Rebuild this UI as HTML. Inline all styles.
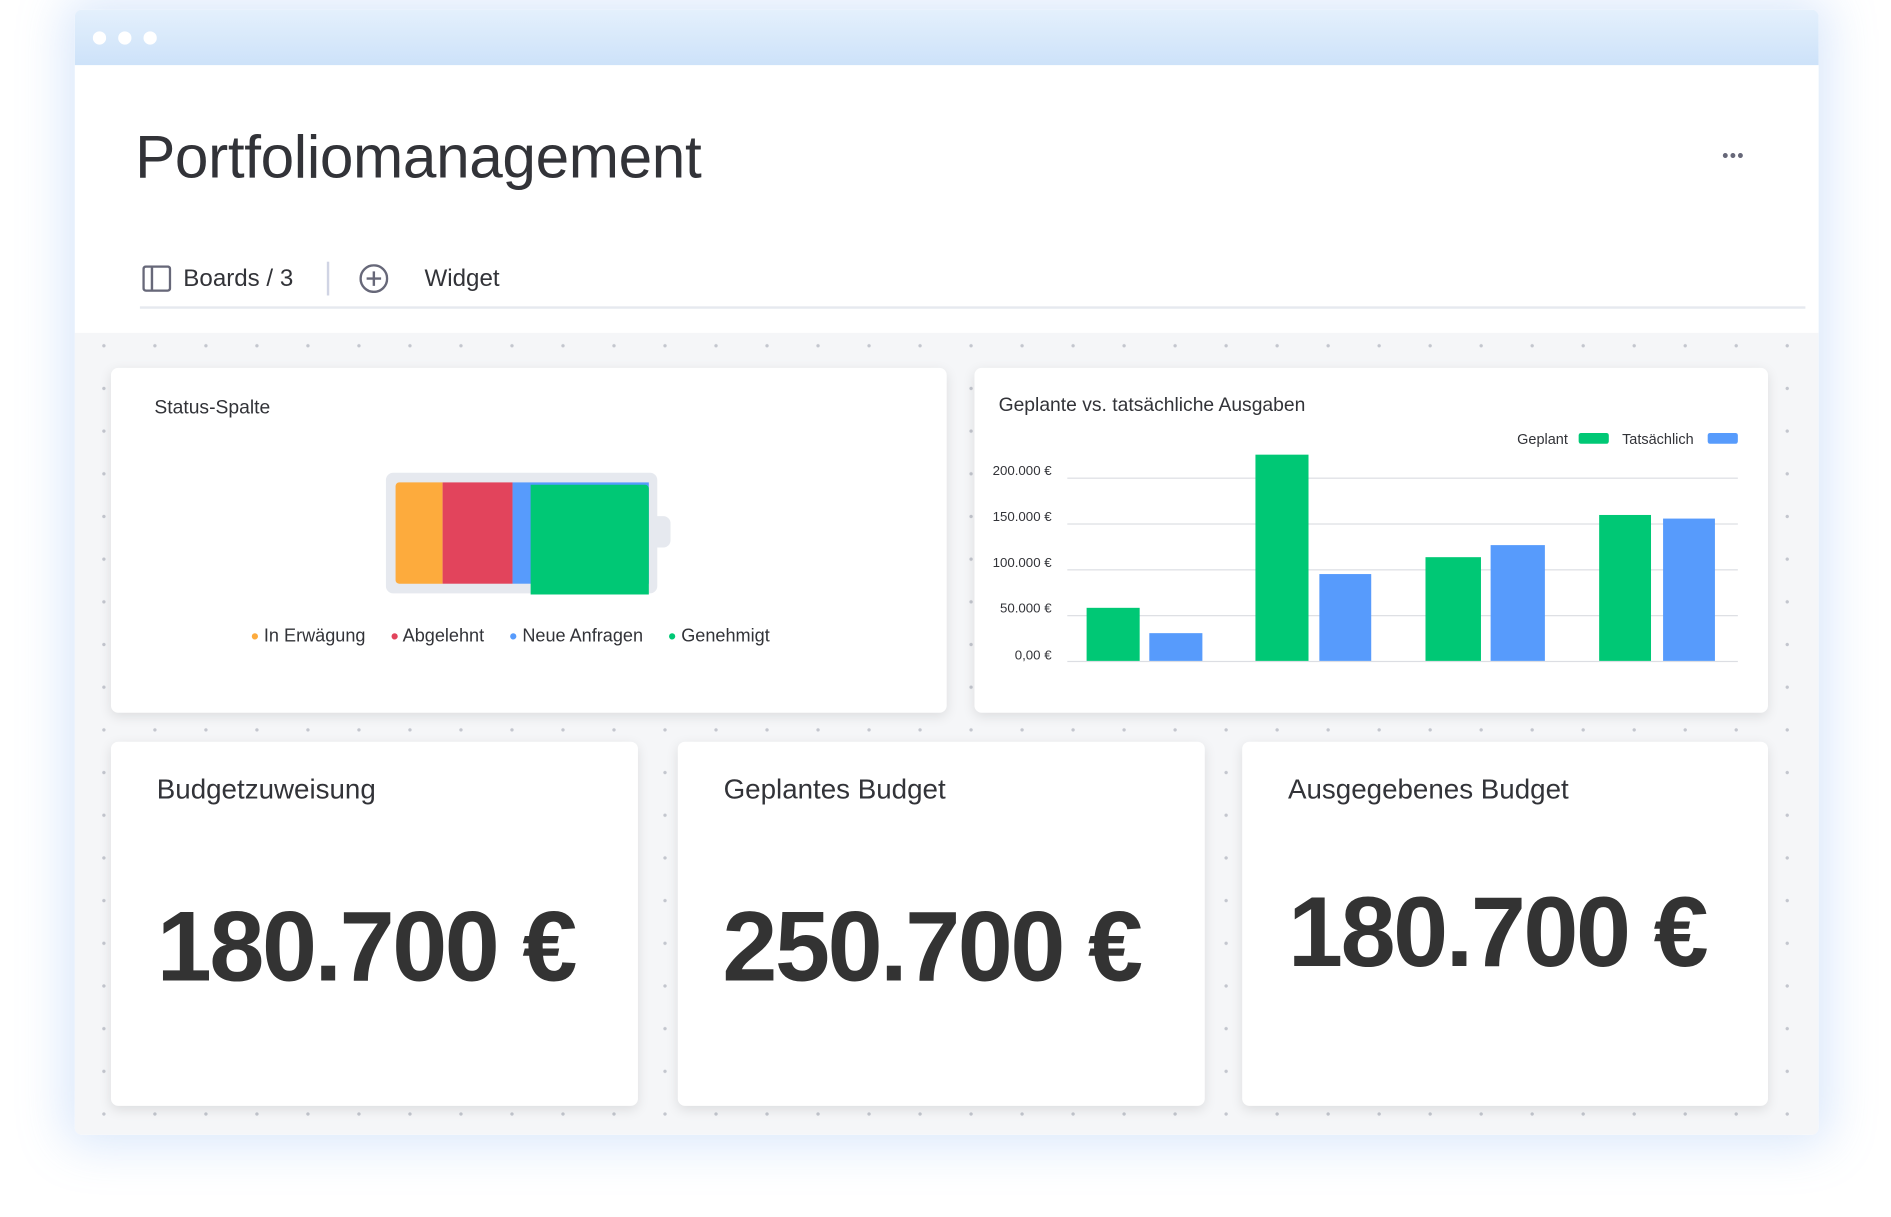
<!DOCTYPE html>
<html><head><meta charset="utf-8">
<style>
html,body{margin:0;padding:0;background:#fff;overflow:hidden;width:1891px;height:1217px}
#s{position:absolute;left:0;top:0;width:1568px;height:1009px;transform:scale(1.206);transform-origin:0 0;font-family:"Liberation Sans",sans-serif;color:#323338}
.a{position:absolute}
.win{left:62px;top:8px;width:1446px;height:933px;background:#fff;border-radius:6px;box-shadow:0 0 40px 8px rgba(120,170,240,.28);overflow:hidden}
.bar{left:0;top:0;width:1446px;height:46px;background:linear-gradient(#e4f0fc,#cde2f9)}
.dot{width:11px;height:11px;border-radius:50%;background:#fff;top:18px}
.grid{left:0;top:268px;width:1446px;height:665px;background-color:#f5f6f8;background-image:radial-gradient(circle,#c3c6ce 1.2px,transparent 1.6px);background-size:42.3px 35.4px;background-position:3px -7px}
.card{background:#fff;border-radius:6px;box-shadow:0 3px 10px rgba(0,0,0,.1)}
.t16{font-size:16px;color:#323338}
.lbl{font-size:11px;color:#323338;text-align:right;width:70px}
.gl{height:1px;background:#dcdee3;left:885px;width:556px}
.big{font-size:82px;font-weight:bold;color:#333;letter-spacing:-2px}
.h24{font-size:23px;color:#323338}
.ld{font-size:19px;vertical-align:-2px}
</style></head><body>
<div id="s">
<div class="a win">
  <div class="a bar"></div>
  <div class="a dot" style="left:15px"></div>
  <div class="a dot" style="left:36px"></div>
  <div class="a dot" style="left:57px"></div>
  <div class="a grid"></div>
</div>
<div class="a" style="left:112px;top:101px;font-size:50px;color:#323338;letter-spacing:-0.3px">Portfoliomanagement</div>
<div class="a" style="left:1428px;top:121px;font-size:15px;color:#676879;letter-spacing:1px">•••</div>
<svg class="a" style="left:118px;top:220px" width="24" height="22" viewBox="0 0 24 22"><rect x="1" y="1" width="22" height="20" rx="2" fill="none" stroke="#676879" stroke-width="2"/><line x1="8" y1="1" x2="8" y2="21" stroke="#676879" stroke-width="2"/></svg>
<div class="a" style="left:152px;top:220px;font-size:20px">Boards / 3</div>
<div class="a" style="left:271px;top:217px;width:2px;height:28px;background:#d0d4e4"></div>
<svg class="a" style="left:298px;top:219px" width="24" height="24" viewBox="0 0 24 24"><circle cx="12" cy="12" r="11" fill="none" stroke="#676879" stroke-width="2"/><path d="M12 6v12M6 12h12" stroke="#676879" stroke-width="2"/></svg>
<div class="a" style="left:352px;top:220px;font-size:20px">Widget</div>
<div class="a" style="left:116px;top:254px;width:1381px;height:2px;background:#e6e9ef"></div>

<div class="a card" style="left:92px;top:305px;width:693px;height:286px"></div>
<div class="a t16" style="left:128px;top:330px">Status-Spalte</div>
<div class="a" style="left:320px;top:392px;width:225px;height:100px;background:#e6e9ef;border-radius:6px"></div>
<div class="a" style="left:538px;top:428px;width:18px;height:26px;background:#e6e9ef;border-radius:6px"></div>
<div class="a" style="left:328px;top:400px;width:39px;height:84px;background:#fdab3d;border-radius:3px 0 0 3px"></div>
<div class="a" style="left:367px;top:400px;width:58px;height:84px;background:#e2445c"></div>
<div class="a" style="left:425px;top:400px;width:113px;height:84px;background:#579bfc"></div>
<div class="a" style="left:440px;top:402px;width:98px;height:91px;background:#00c875;border-radius:0 3px 0 0"></div>
<div class="a" style="left:208px;top:518px;font-size:15px;white-space:nowrap">
<span class="ld" style="color:#fdab3d">•</span> In Erwägung &nbsp;&nbsp;&nbsp;&nbsp;<span class="ld" style="color:#e2445c">•</span> Abgelehnt &nbsp;&nbsp;&nbsp;&nbsp;<span class="ld" style="color:#579bfc">•</span> Neue Anfragen &nbsp;&nbsp;&nbsp;&nbsp;<span class="ld" style="color:#00c875">•</span> Genehmigt</div>

<div class="a card" style="left:808px;top:305px;width:658px;height:286px"></div>
<div class="a t16" style="left:828px;top:328px">Geplante vs. tatsächliche Ausgaben</div>
<div class="a" style="left:1258px;top:357px;font-size:12px">Geplant</div>
<div class="a" style="left:1309px;top:359px;width:25px;height:9px;background:#00c875;border-radius:2px"></div>
<div class="a" style="left:1345px;top:357px;font-size:12px">Tatsächlich</div>
<div class="a" style="left:1416px;top:359px;width:25px;height:9px;background:#579bfc;border-radius:2px"></div>
<div class="a lbl" style="left:802px;top:385px">200.000 €</div>
<div class="a lbl" style="left:802px;top:423px">150.000 €</div>
<div class="a lbl" style="left:802px;top:461px">100.000 €</div>
<div class="a lbl" style="left:802px;top:499px">50.000 €</div>
<div class="a lbl" style="left:802px;top:538px">0,00 €</div>
<div class="a gl" style="top:396px"></div>
<div class="a gl" style="top:434px"></div>
<div class="a gl" style="top:472px"></div>
<div class="a gl" style="top:510px"></div>
<div class="a gl" style="top:548px"></div>
<div class="a" style="left:901px;top:504px;width:44px;height:44px;background:#00c875"></div>
<div class="a" style="left:953px;top:525px;width:44px;height:23px;background:#579bfc"></div>
<div class="a" style="left:1041px;top:377px;width:44px;height:171px;background:#00c875"></div>
<div class="a" style="left:1094px;top:476px;width:43px;height:72px;background:#579bfc"></div>
<div class="a" style="left:1182px;top:462px;width:46px;height:86px;background:#00c875"></div>
<div class="a" style="left:1236px;top:452px;width:45px;height:96px;background:#579bfc"></div>
<div class="a" style="left:1326px;top:427px;width:43px;height:121px;background:#00c875"></div>
<div class="a" style="left:1379px;top:430px;width:43px;height:118px;background:#579bfc"></div>

<div class="a card" style="left:92px;top:615px;width:437px;height:302px"></div>
<div class="a card" style="left:562px;top:615px;width:437px;height:302px"></div>
<div class="a card" style="left:1030px;top:615px;width:436px;height:302px"></div>
<div class="a h24" style="left:130px;top:641px">Budgetzuweisung</div>
<div class="a h24" style="left:600px;top:641px">Geplantes Budget</div>
<div class="a h24" style="left:1068px;top:641px">Ausgegebenes Budget</div>
<div class="a big" style="left:130px;top:739px">180.700 €</div>
<div class="a big" style="left:599px;top:739px">250.700 €</div>
<div class="a big" style="left:1068px;top:727px">180.700 €</div>
</div>
</body></html>
